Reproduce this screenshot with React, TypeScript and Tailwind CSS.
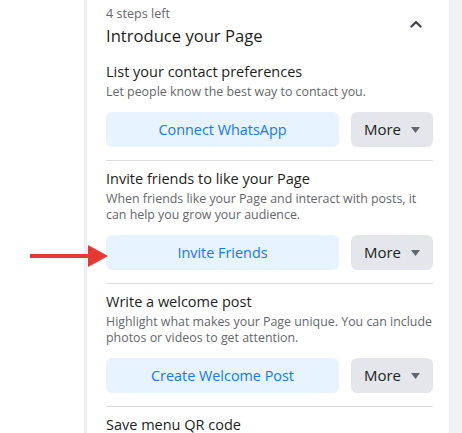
import { ReactNode } from 'react'

// ─── Data ─────────────────────────────────────────────────────────────────────

interface Step {
  title: string
  description: ReactNode
  action: string
}

const STEPS: Step[] = [
  {
    title: 'List your contact preferences',
    description: 'Let people know the best way to contact you.',
    action: 'Connect WhatsApp',
  },
  {
    title: 'Invite friends to like your Page',
    description: (
      <>
        When friends like your Page and interact with posts, it
        <br />
        can help you grow your audience.
      </>
    ),
    action: 'Invite Friends',
  },
  {
    title: 'Write a welcome post',
    description: (
      <>
        Highlight what makes your Page unique. You can include
        <br />
        photos or videos to get attention.
      </>
    ),
    action: 'Create Welcome Post',
  },
]

const font = { fontFamily: '"Open Sans", "Noto Sans", sans-serif' }

// ─── Pieces ───────────────────────────────────────────────────────────────────

function StepRow({ step, first }: { step: Step; first: boolean }) {
  return (
    <div className={first ? 'pt-[15px]' : 'pt-2'}>
      <p className="whitespace-nowrap text-[14.5px] leading-[20px] text-[#1c1e21]">{step.title}</p>
      <p className="mt-[2px] whitespace-nowrap text-[12.4px] leading-[16px] text-[#65676b]">{step.description}</p>
      <div className="mt-3 flex gap-3">
        <button className="h-[35px] w-[233px] rounded-md bg-[#e7f3ff] text-[14.4px] font-medium text-[#1877f2]">
          {step.action}
        </button>
        <button className="flex h-[35px] flex-1 items-center justify-center gap-[10px] rounded-md bg-[#e4e6eb] text-[15px] font-medium text-[#1c1e21]">
          More
          <svg width="9" height="6" viewBox="0 0 9 6" aria-hidden="true">
            <path d="M0 0h9L4.5 6z" fill="#606770" />
          </svg>
        </button>
      </div>
      <div className="mt-[13px] h-px bg-[#dadde1]" />
    </div>
  )
}

// ─── App ──────────────────────────────────────────────────────────────────────

export default function App() {
  return (
    <div className="relative flex h-[433px] w-[462px] overflow-hidden bg-white" style={font}>
      <div className="w-[84px] shrink-0" />

      {/* card */}
      <div className="w-[366px] shrink-0 border-l-[3px] border-r border-[#eceef0] bg-white pl-[19px] pr-[16px]">
        <div className="flex items-start justify-between pt-[6px]">
          <div>
            <p className="text-[12.6px] leading-[16px] text-[#65676b]">4 steps left</p>
            <p className="mt-[3px] text-[16.6px] leading-[22px] text-[#1c1e21]">Introduce your Page</p>
          </div>
          <svg className="mr-[11px] mt-[14px]" width="12" height="8" viewBox="0 0 12 8" aria-hidden="true">
            <path d="M1.5 6.5 6 2l4.5 4.5" fill="none" stroke="#444950" strokeWidth="2.4" strokeLinecap="round" strokeLinejoin="round" />
          </svg>
        </div>

        {STEPS.map((step, i) => (
          <StepRow key={step.action} step={step} first={i === 0} />
        ))}

        <p className="whitespace-nowrap pt-2 text-[14.5px] leading-[20px] text-[#1c1e21]">Save menu QR code</p>
      </div>

      <div className="flex-1 bg-[#f0f2f5]" />

      {/* red pointer arrow */}
      <svg className="absolute left-[30px] top-[245px]" width="78" height="22" viewBox="0 0 78 22" aria-hidden="true">
        <rect x="0" y="9" width="60" height="4" fill="#e53935" />
        <path d="M58 0 78 11 58 22z" fill="#e53935" />
      </svg>
    </div>
  )
}
